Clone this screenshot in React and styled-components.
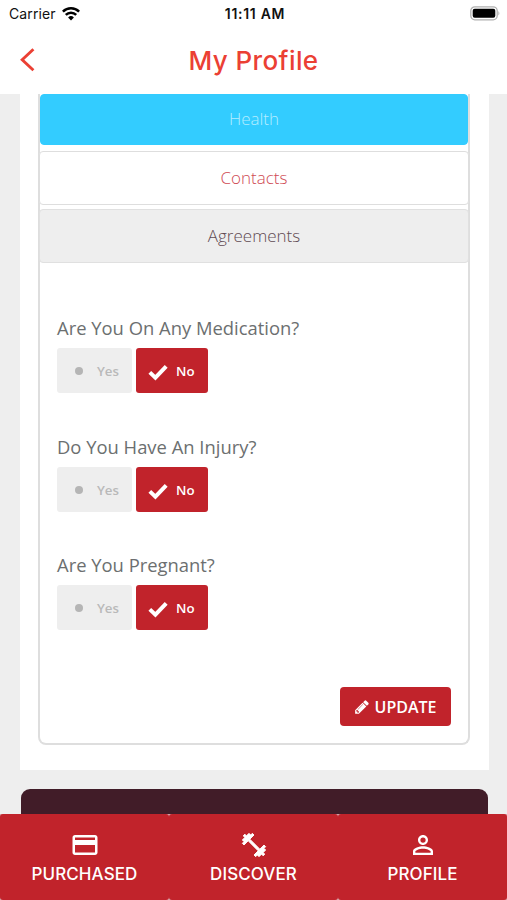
import styled, { createGlobalStyle } from "styled-components";
import {
  MdOutlineCreditCard,
  MdPersonOutline,
  MdFitnessCenter,
} from "react-icons/md";

const questions = [
  "Are You On Any Medication?",
  "Do You Have An Injury?",
  "Are You Pregnant?",
];

export default function App() {
  return (
    <>
      <GlobalStyle />
      <Screen>
        <StatusBar>
          <Carrier>
            <span>Carrier</span>
            <WifiIcon />
          </Carrier>
          <Time>11:11 AM</Time>
          <BatteryIcon />
        </StatusBar>
        <Header>
          <BackButton aria-label="Back">
            <svg width="16" height="26" viewBox="0 0 16 26">
              <path
                d="M14.4 2.2 L3.2 12.7 L14.4 23.2"
                fill="none"
                stroke="currentColor"
                strokeWidth="2.9"
              />
            </svg>
          </BackButton>
          <Title>My Profile</Title>
        </Header>
        <Main>
          <Card>
            <Panel>
              <HealthTab>Health</HealthTab>
              <Tab $bg="#ffffff" $border="#dedede" $color="#cf4a54">
                Contacts
              </Tab>
              <Tab $bg="#eeeeee" $border="#e0e0e0" $color="#5f4a52">
                Agreements
              </Tab>
              <Questions>
                {questions.map((question) => (
                  <Question key={question}>
                    <Label>{question}</Label>
                    <Options>
                      <Option>
                        <Dot />
                        Yes
                      </Option>
                      <Option $active>
                        <CheckIcon />
                        No
                      </Option>
                    </Options>
                  </Question>
                ))}
              </Questions>
              <UpdateButton>
                <PencilIcon />
                <span>UPDATE</span>
              </UpdateButton>
            </Panel>
          </Card>
          <DarkCard />
        </Main>
        <NavBar>
          <NavItem>
            <MdOutlineCreditCard size={30} />
            <span>PURCHASED</span>
          </NavItem>
          <NavItem>
            <DumbbellIcon size={28} />
            <span>DISCOVER</span>
          </NavItem>
          <NavItem>
            <MdPersonOutline size={30} />
            <span>PROFILE</span>
          </NavItem>
        </NavBar>
      </Screen>
    </>
  );
}

function WifiIcon() {
  return (
    <svg width="18" height="14" viewBox="0 0 18 14">
      <g fill="none" stroke="#000" strokeWidth="2.5">
        <path d="M0.9 4.6 A11.6 11.6 0 0 1 17.1 4.6" />
        <path d="M3.8 7.9 A7.3 7.3 0 0 1 14.2 7.9" />
      </g>
      <path d="M9 13.4 L6.1 10.5 A4.1 4.1 0 0 1 11.9 10.5 Z" />
    </svg>
  );
}

function BatteryIcon() {
  return (
    <svg width="31" height="15" viewBox="0 0 31 15">
      <rect
        x="0.8"
        y="0.8"
        width="26.4"
        height="13"
        rx="4"
        fill="#fff"
        stroke="#b0b0b0"
        strokeWidth="1.3"
      />
      <rect x="2.7" y="2.8" width="22.6" height="9" rx="2" />
      <path d="M28.4 5 Q30.4 7.3 28.4 9.6 Z" fill="#b0b0b0" />
    </svg>
  );
}

function CheckIcon() {
  return (
    <svg width="22" height="18" viewBox="0 0 22 18">
      <path
        d="M2.8 9.4 L8.4 14.6 L19.2 3.4"
        fill="none"
        stroke="currentColor"
        strokeWidth="4"
      />
    </svg>
  );
}

function PencilIcon() {
  return (
    <svg width="16" height="16" viewBox="0 0 1792 1792" fill="currentColor">
      <path d="M491 1536l91-91-235-235-91 91v107h128v128h107zm523-928q0-22-22-22-10 0-17 7l-542 542q-7 7-7 17 0 22 22 22 10 0 17-7l542-542q7-7 7-17zm-54-192l416 416-832 832h-416v-416zm683 96q0 53-37 90l-166 166-416-416 166-165q36-38 90-38 53 0 91 38l235 234q37 39 37 91z" />
    </svg>
  );
}

const GlobalStyle = createGlobalStyle`
  * {
    box-sizing: border-box;
  }
  body {
    margin: 0;
    font-family: "Open Sans", sans-serif;
  }
  button {
    border: none;
    padding: 0;
    font-family: inherit;
    cursor: pointer;
  }
`;

const Screen = styled.div`
  display: flex;
  flex-direction: column;
  width: 507px;
  height: 900px;
  overflow: hidden;
  background-color: #eeeeee;
`;

const StatusBar = styled.div`
  display: grid;
  grid-template-columns: 1fr auto 1fr;
  align-items: center;
  height: 27px;
  flex: none;
  padding: 0 6px 0 9px;
  background-color: #fff;
  font-family: Inter, sans-serif;
  font-size: 14px;
  color: #111;

  > svg {
    justify-self: end;
  }
`;

const Carrier = styled.div`
  display: flex;
  align-items: center;
  gap: 6px;
  letter-spacing: 0.1px;
`;

const Time = styled.div`
  font-weight: 600;
  letter-spacing: 0.7px;
`;

const Header = styled.header`
  display: grid;
  grid-template-columns: 60px 1fr 60px;
  align-items: center;
  height: 67px;
  flex: none;
  padding-bottom: 1px;
  background-color: #fff;
  color: #eb4034;
`;

const BackButton = styled.button`
  display: flex;
  padding-left: 19px;
  background: none;
  color: inherit;
`;

const Title = styled.h1`
  margin: 0;
  text-align: center;
  font-family: Inter, sans-serif;
  font-size: 26px;
  font-weight: 500;
  letter-spacing: 0.4px;
`;

const Main = styled.main`
  flex: 1;
  min-height: 0;
  overflow: hidden;
  padding: 0 18px 0 20px;
`;

const Card = styled.section`
  height: 676px;
  padding: 0 19px 0 18px;
  background-color: #fff;
`;

const Panel = styled.div`
  display: flex;
  flex-direction: column;
  height: 651px;
  border: 2px solid #dedede;
  border-top: none;
  border-radius: 0 0 8px 8px;
`;

const Tab = styled.button`
  flex: none;
  height: 54px;
  margin: 0 -1px 4px;
  padding-bottom: 2px;
  border: 1px solid ${(props) => props.$border};
  border-radius: 4px;
  background-color: ${(props) => props.$bg};
  color: ${(props) => props.$color};
  font-size: 17px;
  font-weight: 350;
`;

const HealthTab = styled(Tab).attrs({
  $bg: "#33ccff",
  $border: "#33ccff",
  $color: "#b5ecff",
})`
  height: 51px;
  margin: 0 0 6px;
`;

const Questions = styled.div`
  display: flex;
  flex-direction: column;
  gap: 41.5px;
  padding: 49px 17px 0;
`;

const Question = styled.div`
  display: flex;
  flex-direction: column;
`;

const Label = styled.p`
  margin: 0;
  height: 32px;
  line-height: 24px;
  font-size: 18.4px;
  color: #6c6f70;
`;

const Options = styled.div`
  display: flex;
  gap: 4px;
`;

const Option = styled.button`
  display: flex;
  align-items: center;
  width: ${(props) => (props.$active ? "72px" : "75px")};
  height: 45px;
  padding-top: 1px;
  padding-left: ${(props) => (props.$active ? "11px" : "18px")};
  gap: ${(props) => (props.$active ? "7px" : "14px")};
  border-radius: 3px;
  background-color: ${(props) => (props.$active ? "#c1232b" : "#eeeeee")};
  color: ${(props) => (props.$active ? "#fff" : "#b9b9b9")};
  font-size: 13.3px;
  font-weight: 600;

  svg {
    flex: none;
    margin-top: 2px;
  }
`;

const Dot = styled.span`
  width: 8px;
  height: 8px;
  border-radius: 50%;
  background-color: #b5b5b5;
`;

const UpdateButton = styled.button`
  display: flex;
  align-items: center;
  justify-content: center;
  gap: 5px;
  width: 111px;
  height: 39px;
  margin: auto 17px 17px auto;
  padding-right: 1px;
  border-radius: 4px;
  background-color: #c1232b;
  color: #fff;
  font-size: 16px;
  font-weight: 600;
`;

const DarkCard = styled.section`
  height: 60px;
  margin: 19px 1px 0;
  border-radius: 9px;
  background-color: #411c28;
`;

const NavBar = styled.nav`
  display: flex;
  flex: none;
  height: 86px;
  background-color: #d9a9ad;
`;

const NavItem = styled.button`
  display: flex;
  flex: 1;
  flex-direction: column;
  align-items: center;
  padding-top: 16px;
  border-radius: 3px;
  background-color: #c1232b;
  color: #fff;
  font-family: Inter, sans-serif;
  font-size: 17px;
  font-weight: 500;
  letter-spacing: 0.1px;
  line-height: 28px;

  svg {
    flex: none;
  }
`;

const DumbbellIcon = styled(MdFitnessCenter)`
  margin: 1px 0;

  path {
    stroke: #fff;
    stroke-width: 0.8px;
  }

  path[fill="none"] {
    stroke: none;
  }
`;
